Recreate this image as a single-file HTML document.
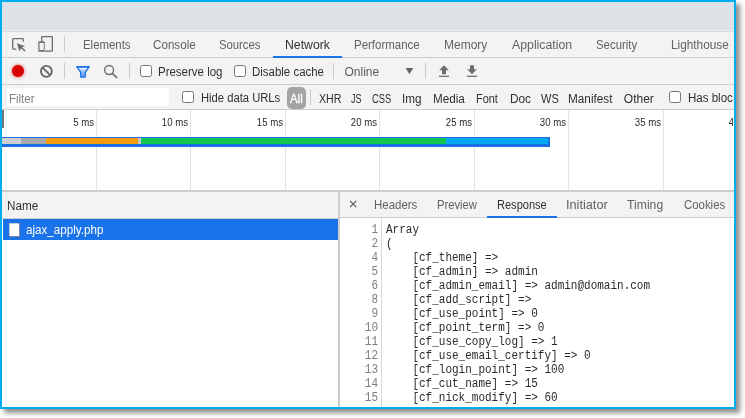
<!DOCTYPE html>
<html><head><meta charset="utf-8"><title>DevTools - Network</title>
<style>
html,body{margin:0;padding:0;background:#fff;}
body{width:745px;height:418px;overflow:hidden;position:relative;font-family:"Liberation Sans",sans-serif;font-size:12px;color:#333;}
#frame{position:absolute;left:0;top:0;width:732px;height:405px;border:2px solid #00adee;box-shadow:4px 4px 5px rgba(0,0,0,.45);background:#fff;overflow:hidden;}
#in{position:absolute;left:-2px;top:-2px;width:745px;height:418px;will-change:transform;}
.abs{position:absolute;}
.t{position:absolute;white-space:nowrap;line-height:14px;height:14px;transform-origin:0 0;}
.hl{position:absolute;left:0;width:745px;height:1px;background:#cdcdcd;}
.vsep{position:absolute;width:1px;background:#cacaca;}
.cb{position:absolute;width:10px;height:10px;border:1px solid #767676;border-radius:2.5px;background:#fff;}
.mono{font-family:"Liberation Mono",monospace;font-size:12px;line-height:14px;white-space:pre;position:absolute;}
.ln{color:#7d7d7d;text-align:right;width:30px;left:348px;transform:scaleX(.9167);transform-origin:100% 0;}
.cd{color:#2b2b2b;left:386px;transform:scaleX(.9167);transform-origin:0 0;}
.grid{position:absolute;top:110px;width:1px;height:80px;background:#e1e1e1;}
.ms{position:absolute;top:115.6px;width:60px;text-align:right;font-size:10px;line-height:14px;color:#2a2a2a;transform:scaleX(.96);transform-origin:100% 0;}
</style></head><body>
<div id="frame"><div id="in">

<!-- top grey strip -->
<div class="abs" style="left:0;top:0;width:745px;height:30px;background:#dee1e6"></div>
<div class="abs" style="left:0;top:30px;width:745px;height:1px;background:#ececec"></div>
<div class="abs" style="left:0;top:31px;width:745px;height:1px;background:#dcdcdc"></div>

<!-- tab bar -->
<div class="abs" style="left:0;top:32px;width:745px;height:25px;background:#f3f3f3"></div>
<div class="hl" style="top:57px"></div>
<svg class="abs" style="left:10px;top:36px" width="18" height="18" viewBox="0 0 18 18"><path d="M13.3 5.8V3.5a.8.8 0 0 0-.8-.8h-9a.8.8 0 0 0-.8.8v8.8a.8.8 0 0 0 .8.8H6.2" fill="none" stroke="#6e6e6e" stroke-width="1.3"/><path d="M6.9 7.2L15.2 10.2 12 11.3 15.7 14.4 14.6 15.6 11 12.5 9.3 15.2z" fill="#6e6e6e"/></svg>
<svg class="abs" style="left:36px;top:34px" width="18" height="20" viewBox="0 0 18 20"><path d="M5.65 7.3V3.4a.75.75 0 0 1 .75-.75H15.6a.75.75 0 0 1 .75.75V16.4a.75.75 0 0 1-.75.75H8.7" fill="none" stroke="#6e6e6e" stroke-width="1.3"/><path fill-rule="evenodd" d="M3.1 7.3h4.8a.8.8 0 0 1 .8.8v8.9a.8.8 0 0 1-.8.8H3.1a.8.8 0 0 1-.8-.8V8.1a.8.8 0 0 1 .8-.8zM3.5 8.9v7h4.3v-7z" fill="#6e6e6e"/></svg>
<div class="vsep" style="left:64px;top:36px;height:16px"></div>
<div class="abs" style="left:273px;top:56px;width:69px;height:2px;background:#1a73e8"></div>

<!-- toolbar -->
<div class="abs" style="left:0;top:58px;width:745px;height:26px;background:#f3f3f3"></div>
<div class="hl" style="top:84px"></div>

<div class="abs" style="left:12px;top:65px;width:12px;height:12px;border-radius:50%;background:#d90000;box-shadow:0 0 2.5px 1px rgba(225,40,40,.45)"></div>
<svg class="abs" style="left:39px;top:64px" width="15" height="15" viewBox="0 0 15 15"><circle cx="7.4" cy="7.35" r="5.45" fill="none" stroke="#666" stroke-width="1.8"/><path d="M3.6 3.55l7.6 7.6" stroke="#666" stroke-width="1.8"/></svg>
<div class="vsep" style="left:64px;top:63px;height:16px"></div>
<svg class="abs" style="left:75px;top:65px" width="16" height="14" viewBox="0 0 16 14"><defs><linearGradient id="fg" x1="0" y1="0" x2="0" y2="1"><stop offset="0" stop-color="#1a73e8"/><stop offset=".18" stop-color="#e8f0fd"/><stop offset=".45" stop-color="#9cc0f6"/><stop offset="1" stop-color="#6fa4f1"/></linearGradient></defs><path d="M1.7 1.7h12.6L10.2 7.3v4.7H5.8V7.3z" fill="url(#fg)" stroke="#1a73e8" stroke-width="1.4" stroke-linejoin="round"/></svg>
<svg class="abs" style="left:103px;top:64px" width="16" height="16" viewBox="0 0 16 16"><circle cx="6.1" cy="6.0" r="4.45" fill="none" stroke="#6e6e6e" stroke-width="1.4"/><path d="M9.3 9.3l4.8 4.7" stroke="#6e6e6e" stroke-width="1.7"/></svg>
<div class="vsep" style="left:129px;top:63px;height:16px"></div>
<div class="cb" style="left:140px;top:65px"></div>
<div class="cb" style="left:234px;top:65px"></div>
<div class="vsep" style="left:333px;top:63px;height:16px"></div>
<svg class="abs" style="left:404px;top:66px" width="12" height="10" viewBox="0 0 12 10"><path d="M1.6 2h7.7L5.45 8.3z" fill="#666"/></svg>
<div class="vsep" style="left:425px;top:63px;height:16px"></div>
<svg class="abs" style="left:438px;top:64px" width="12" height="14" viewBox="0 0 12 14"><path d="M6 1.2L1.2 6.2H4v4h4v-4h2.8z" fill="#6e6e6e"/><rect x="1" y="11.7" width="10" height="1.25" fill="#6e6e6e"/></svg>
<svg class="abs" style="left:466px;top:64px" width="12" height="14" viewBox="0 0 12 14"><path d="M6 10.2L1.2 5.2H4v-4h4v4h2.8z" fill="#6e6e6e"/><rect x="1" y="11.7" width="10" height="1.25" fill="#6e6e6e"/></svg>

<!-- filter bar -->
<div class="abs" style="left:0;top:85px;width:745px;height:24px;background:#f3f3f3"></div>
<div class="hl" style="top:109px"></div>
<div class="abs" style="left:6px;top:88px;width:163px;height:18px;background:#fff"></div>
<div class="cb" style="left:182px;top:91px"></div>
<div class="abs" style="left:287px;top:87px;width:19px;height:21.6px;border-radius:5px;background:#a3a3a3"></div>
<div class="vsep" style="left:310px;top:89px;height:16px"></div>
<div class="cb" style="left:669px;top:91px"></div>

<!-- overview -->
<div class="abs" style="left:0;top:110px;width:745px;height:80px;background:#fff"></div>
<div class="grid" style="left:96px"></div><div class="grid" style="left:190px"></div><div class="grid" style="left:285px"></div><div class="grid" style="left:379px"></div><div class="grid" style="left:474px"></div><div class="grid" style="left:568px"></div><div class="grid" style="left:663px"></div>
<div class="ms" style="left:34px">5 ms</div><div class="ms" style="left:128.2px">10 ms</div><div class="ms" style="left:222.60000000000002px">15 ms</div><div class="ms" style="left:317.1px">20 ms</div><div class="ms" style="left:411.5px">25 ms</div><div class="ms" style="left:506.20000000000005px">30 ms</div><div class="ms" style="left:601px">35 ms</div><div class="ms" style="left:695.4px">40 ms</div>
<div class="abs" style="left:2px;top:110px;width:2px;height:18px;background:#737373"></div>
<div class="abs" style="left:2.4px;top:136.6px;width:547.6px;height:10px;background:#1a6fe6"></div>
<div class="abs" style="left:2px;top:138.3px;width:19px;height:5.4px;background:#cfcfcf"></div>
<div class="abs" style="left:21px;top:138.3px;width:25px;height:5.4px;background:#a9a9a9"></div>
<div class="abs" style="left:46px;top:138.3px;width:92px;height:5.4px;background:#fb9a0b"></div>
<div class="abs" style="left:138px;top:138.3px;width:3px;height:5.4px;background:#c4c4c4"></div>
<div class="abs" style="left:141px;top:138.3px;width:305px;height:5.4px;background:#12c450"></div>
<div class="abs" style="left:446px;top:138.3px;width:102px;height:5.4px;background:#06a9f2"></div>
<div class="abs" style="left:0;top:190px;width:745px;height:2px;background:#cdcdcd"></div>

<!-- left list -->
<div class="abs" style="left:0;top:192px;width:338px;height:26px;background:#f3f3f3"></div>
<div class="abs" style="left:0;top:218px;width:338px;height:1px;background:#cdcdcd"></div>
<div class="abs" style="left:3px;top:219px;width:335px;height:20.6px;background:#1a73e8"></div>
<div class="abs" style="left:9.3px;top:222.5px;width:11.2px;height:14px;background:#fff;box-shadow:inset -1px -1px 0 rgba(20,45,100,.55),inset 1px 1px 0 rgba(20,45,100,.25)"></div>
<div class="abs" style="left:338px;top:192px;width:2px;height:226px;background:#cdcdcd"></div>

<!-- right panel -->
<div class="abs" style="left:340px;top:192px;width:405px;height:25px;background:#f3f3f3"></div>
<div class="abs" style="left:340px;top:217px;width:405px;height:1px;background:#cdcdcd"></div>
<svg class="abs" style="left:348px;top:199px" width="10" height="10" viewBox="0 0 10 10"><path d="M2 1.9l6.2 6.2M8.2 1.9L2 8.1" stroke="#5a5a5a" stroke-width="1.25"/></svg>
<div class="abs" style="left:487px;top:216px;width:70px;height:2px;background:#1a73e8"></div>
<div class="abs" style="left:381px;top:218px;width:1px;height:200px;background:#d8d8d8"></div>

<div class="t" style="left:82.5px;top:38px;color:#626262;transform:scaleX(0.95)">Elements</div>
<div class="t" style="left:153.2px;top:38px;color:#626262;transform:scaleX(0.97)">Console</div>
<div class="t" style="left:219px;top:38px;color:#626262;transform:scaleX(0.94)">Sources</div>
<div class="t" style="left:284.6px;top:38px;color:#303030;transform:scaleX(1.02)">Network</div>
<div class="t" style="left:353.8px;top:38px;color:#626262;transform:scaleX(0.957)">Performance</div>
<div class="t" style="left:444px;top:38px;color:#626262;transform:scaleX(1.0)">Memory</div>
<div class="t" style="left:511.6px;top:38px;color:#626262;transform:scaleX(1.025)">Application</div>
<div class="t" style="left:595.5px;top:38px;color:#626262;transform:scaleX(0.95)">Security</div>
<div class="t" style="left:670.5px;top:38px;color:#626262;transform:scaleX(0.983)">Lighthouse</div>
<div class="t" style="left:158.3px;top:65px;color:#303030;transform:scaleX(0.957)">Preserve log</div>
<div class="t" style="left:252.2px;top:65px;color:#303030;transform:scaleX(0.955)">Disable cache</div>
<div class="t" style="left:344.5px;top:65px;color:#5c5c5c;transform:scaleX(1.0)">Online</div>
<div class="t" style="left:9px;top:92px;color:#808080;transform:scaleX(0.955)">Filter</div>
<div class="t" style="left:200.5px;top:91px;color:#303030;transform:scaleX(0.935)">Hide data URLs</div>
<div class="t" style="left:290px;top:92px;color:#fff;transform:scaleX(0.95);-webkit-text-stroke:.3px #fff">All</div>
<div class="t" style="left:319px;top:92px;color:#303030;transform:scaleX(0.89)">XHR</div>
<div class="t" style="left:351.2px;top:92px;color:#303030;transform:scaleX(0.75)">JS</div>
<div class="t" style="left:372px;top:92px;color:#303030;transform:scaleX(0.78)">CSS</div>
<div class="t" style="left:402.2px;top:92px;color:#303030;transform:scaleX(0.98)">Img</div>
<div class="t" style="left:433px;top:92px;color:#303030;transform:scaleX(0.975)">Media</div>
<div class="t" style="left:476.2px;top:92px;color:#303030;transform:scaleX(0.91)">Font</div>
<div class="t" style="left:509.7px;top:92px;color:#303030;transform:scaleX(0.985)">Doc</div>
<div class="t" style="left:540.6px;top:92px;color:#303030;transform:scaleX(0.92)">WS</div>
<div class="t" style="left:568.4px;top:92px;color:#303030;transform:scaleX(0.98)">Manifest</div>
<div class="t" style="left:623.8px;top:92px;color:#303030;transform:scaleX(1.0)">Other</div>
<div class="t" style="left:687.6px;top:91px;color:#303030;transform:scaleX(0.96)">Has blocked cookies</div>
<div class="t" style="left:7.3px;top:199px;color:#303030;transform:scaleX(0.975)">Name</div>
<div class="t" style="left:26px;top:222.8px;color:#fff;transform:scaleX(0.97)">ajax_apply.php</div>
<div class="t" style="left:373.8px;top:198px;color:#626262;transform:scaleX(0.955)">Headers</div>
<div class="t" style="left:436.5px;top:198px;color:#626262;transform:scaleX(0.937)">Preview</div>
<div class="t" style="left:497px;top:198px;color:#303030;transform:scaleX(0.92)">Response</div>
<div class="t" style="left:566.2px;top:198px;color:#626262;transform:scaleX(1.06)">Initiator</div>
<div class="t" style="left:627.4px;top:198px;color:#626262;transform:scaleX(1.017)">Timing</div>
<div class="t" style="left:684px;top:198px;color:#626262;transform:scaleX(0.95)">Cookies</div>
<div class="abs" style="left:733px;top:85px;width:1px;height:24px;background:#f3f3f3"></div><div class="abs" style="left:733px;top:110px;width:1px;height:80px;background:#fff"></div>

<div class="mono ln" style="top:222.9px">1
2
4
5
6
8
9
10
11
12
13
14
15</div>
<div class="mono cd" style="top:222.9px">Array
(
    [cf_theme] =&gt; 
    [cf_admin] =&gt; admin
    [cf_admin_email] =&gt; admin@domain.com
    [cf_add_script] =&gt; 
    [cf_use_point] =&gt; 0
    [cf_point_term] =&gt; 0
    [cf_use_copy_log] =&gt; 1
    [cf_use_email_certify] =&gt; 0
    [cf_login_point] =&gt; 100
    [cf_cut_name] =&gt; 15
    [cf_nick_modify] =&gt; 60</div>


</div></div>
</body></html>
